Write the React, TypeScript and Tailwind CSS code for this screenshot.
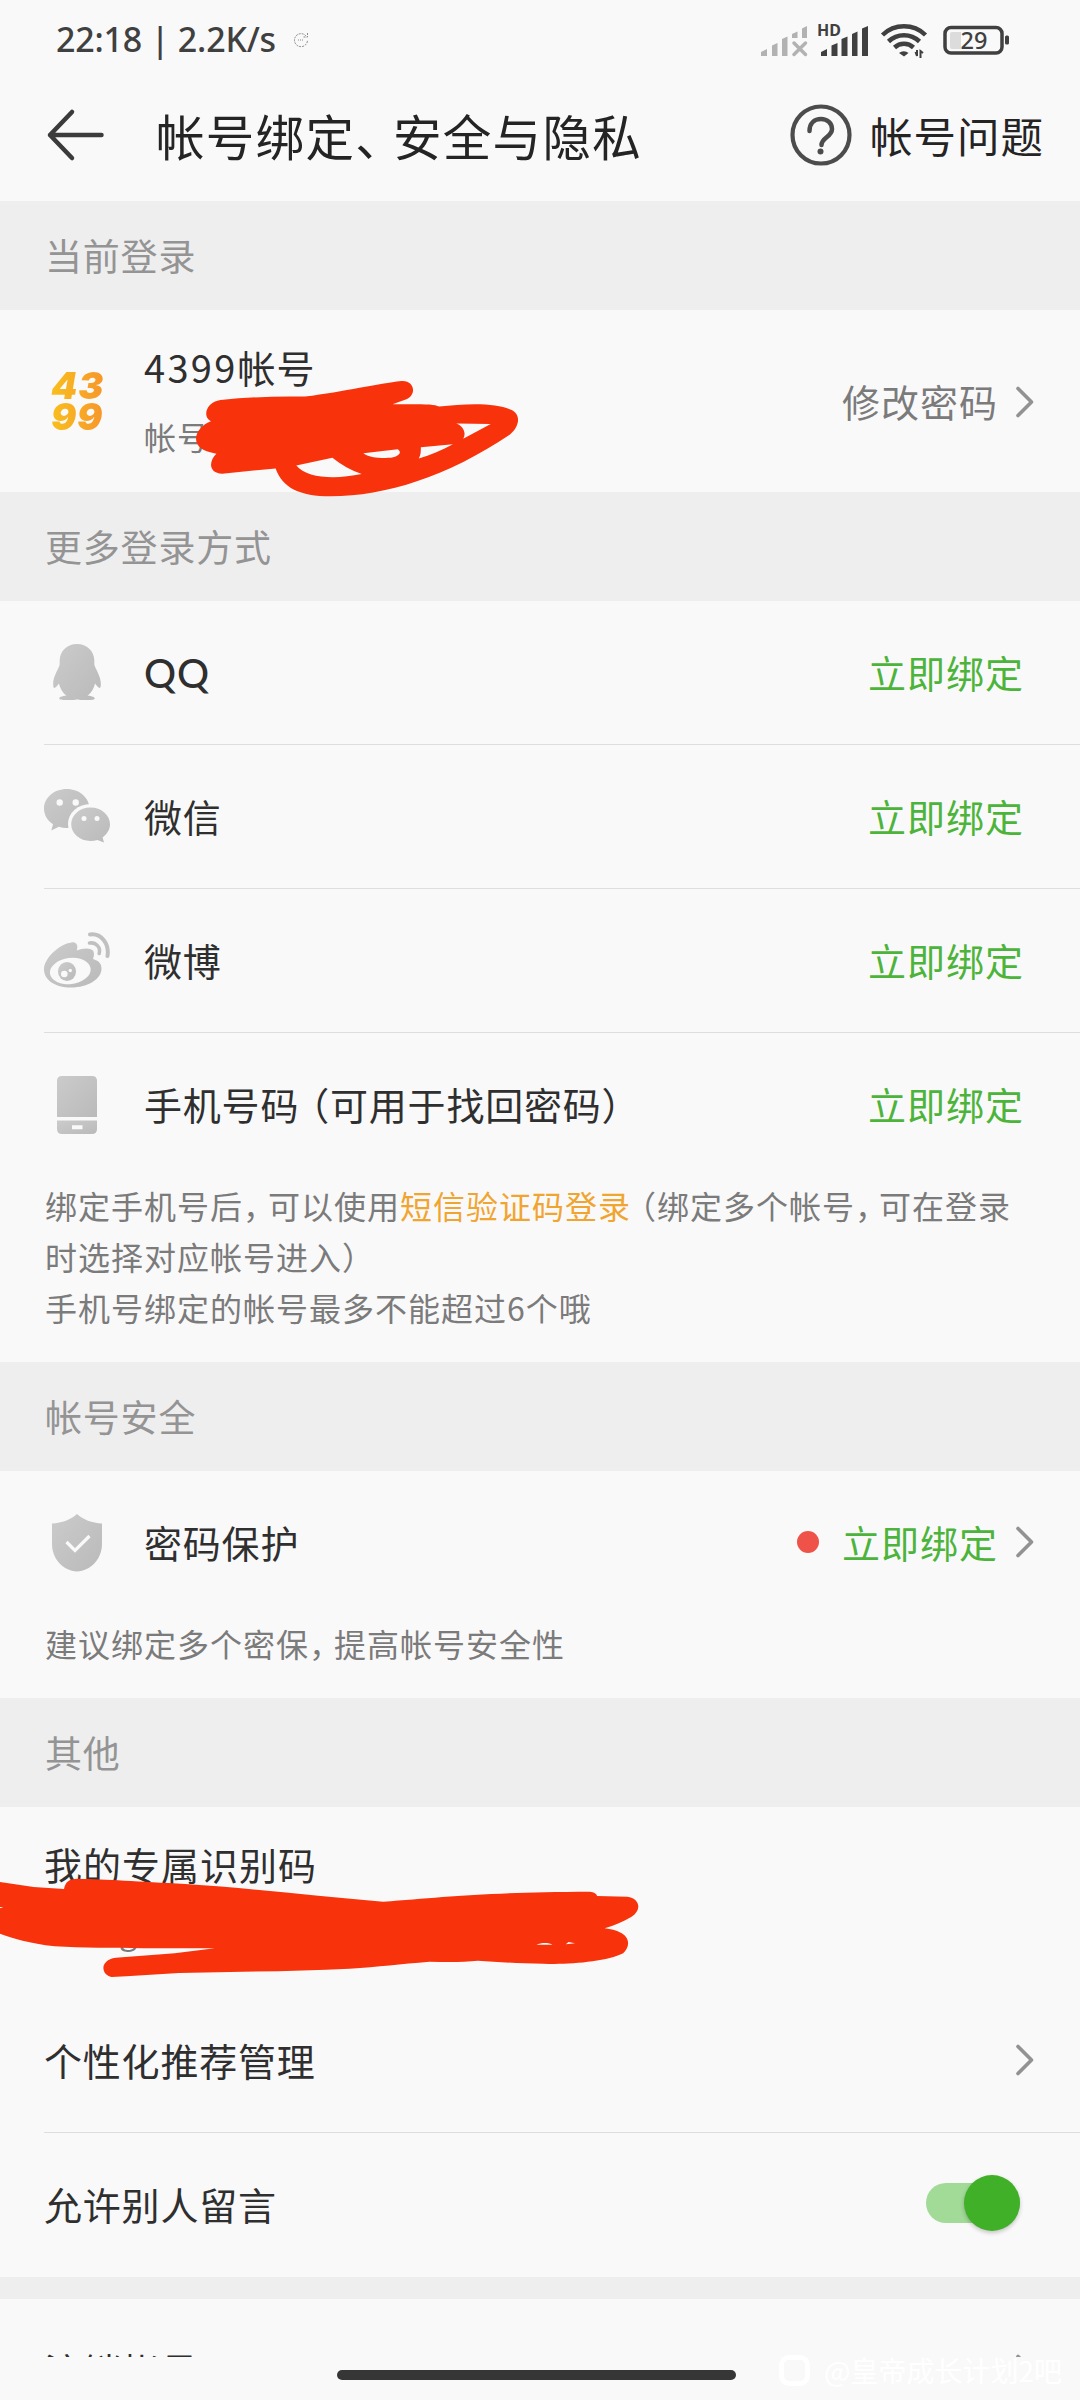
import { useState } from "react";
import type { ReactNode } from "react";

interface RowProps {
  icon?: ReactNode;
  label: ReactNode;
  divider?: boolean;
  children?: ReactNode;
}

function Row({ icon, label, divider, children }: RowProps) {
  return (
    <div className="ml-[44px] shrink-0">
      <div className="flex h-[143px] items-center pb-[3px]">
        {icon && <div className="mt-[3px] mr-[34px] flex h-[66px] w-[66px] items-center justify-center">{icon}</div>}
        <div className="flex-1 text-[38px] tracking-[0.8px] text-[#2f2f2f]">{label}</div>
        {children}
      </div>
      <div className={divider ? "h-px bg-[#dededf]" : "h-px"} />
    </div>
  );
}

function SectionHeader({ children }: { children: ReactNode }) {
  return (
    <div className="flex h-[109px] shrink-0 items-center bg-[#efeeef] pl-[45px] text-[37px] tracking-[0.8px] text-[#949494]">
      {children}
    </div>
  );
}

function BindButton() {
  return <button className="mr-[56px] text-[38px] tracking-[1px] text-[#4db43b]">立即绑定</button>;
}

function Chevron() {
  return (
    <svg className="mt-[2px] mr-[45px] ml-[17px] h-[34px] w-[20px]" viewBox="0 0 20 34" fill="none">
      <path d="M3 3.5 16.5 17 3 30.5" stroke="#929292" strokeWidth="3.6" strokeLinecap="round" strokeLinejoin="round" />
    </svg>
  );
}

// One shared gradient gives the icons their faded grey
function IconDefs() {
  return (
    <svg className="absolute h-0 w-0" aria-hidden="true">
      <defs>
        <linearGradient id="grey" x1="0" y1="0" x2="1" y2="1">
          <stop offset="0" stopColor="#cbcbcb" />
          <stop offset="1" stopColor="#bababb" />
        </linearGradient>
      </defs>
    </svg>
  );
}

function QQIcon() {
  return (
    <svg className="h-[66px] w-[66px]" viewBox="0 0 66 66" fill="url(#grey)">
      <path d="M33 4C23 4 16 11 15.700 20C15.500 22.500 16 24 15.300 26C13 31 9.500 37 9.200 43C9 46 9.600 48 10.300 48C11.500 48 13.500 45.500 15 43.500C16 48 18.500 53 22.500 55.500C17.500 56.300 15.300 57 15.300 58.500C15.300 60 19 60 25 60C30 60 31 59.700 33 59.400C35 59.700 36 60 41 60C47 60 50.700 60 50.700 58.500C50.700 57 48.500 56.300 43.500 55.500C47.500 53 50 48 51 43.500C52.500 45.500 54.500 48 55.700 48C56.400 48 57 46 56.800 43C56.500 37 53 31 50.700 26C50 24 50.500 22.500 50.300 20C50 11 43 4 33 4Z" />
    </svg>
  );
}

function WeChatIcon() {
  return (
    <svg className="h-[66px] w-[66px]" viewBox="0 0 66 66">
      <path
        d="M22.700 5C10 5 0 13.800 0 24.700C0 31 3.500 36.600 9 40.200L7.300 46.500L14.800 42.800C17.300 43.600 20 44 22.700 44C35.400 44 45.500 35.500 45.500 24.700C45.500 13.800 35.400 5 22.700 5Z"
        fill="url(#grey)"
      />
      <ellipse cx="46.500" cy="40" rx="22.500" ry="20" fill="#faf9fa" />
      <path
        d="M46.500 23.500C35.700 23.500 27.200 31 27.200 40.300C27.200 49.600 35.700 57 46.500 57C49 57 51.200 56.700 53.400 56L60 58.600L58.600 53.400C63 50.200 66 45.600 66 40.300C66 31 57.300 23.500 46.500 23.500Z"
        fill="url(#grey)"
      />
      <g fill="#faf9fa">
        <circle cx="15.700" cy="18.500" r="3.200" />
        <circle cx="31.700" cy="18.500" r="3.200" />
        <circle cx="40" cy="34.500" r="2.500" />
        <circle cx="53" cy="34.500" r="2.500" />
      </g>
    </svg>
  );
}

function WeiboIcon() {
  return (
    <svg className="h-[66px] w-[66px]" viewBox="0 0 66 66" fill="none">
      <path
        d="M27.500 14.500C32.500 13.500 34.500 17.500 32.700 22.500C39 20 47.500 19.500 49.500 23.500C50.600 26 49.700 28.500 49 31C54.500 32.500 57.500 35.500 57.500 40.500C57.500 51 44 59.500 27 59.500C11 59.500 0 52 0 41.500C0 30 15.500 16 27.500 14.500Z"
        fill="url(#grey)"
      />
      <ellipse cx="26.300" cy="43" rx="20.500" ry="13" fill="#faf9fa" transform="rotate(-7 26.300 43)" />
      <ellipse cx="23" cy="43.500" rx="9" ry="9.500" fill="url(#grey)" />
      <circle cx="20.300" cy="46" r="3.300" fill="#faf9fa" />
      <circle cx="26.300" cy="42.500" r="1.700" fill="#faf9fa" />
      <path d="M45.500 15C52 14 57 19.500 55.200 25.500" stroke="#c0c0c1" strokeWidth="3.600" strokeLinecap="round" />
      <path d="M46 6.500C57 5 65.500 15.500 63.500 28" stroke="#c0c0c1" strokeWidth="4" strokeLinecap="round" />
    </svg>
  );
}

function PhoneIcon() {
  return (
    <svg className="h-[66px] w-[66px]" viewBox="0 0 66 66" fill="url(#grey)">
      <path d="M18 4H48Q53 4 53 9V45H13V9Q13 4 18 4Z" />
      <path
        fillRule="evenodd"
        d="M13 48.500H53V57Q53 62 48 62H18Q13 62 13 57ZM28 53.300V57.300H38.500V53.300Z"
      />
    </svg>
  );
}

function ShieldIcon() {
  return (
    <svg className="h-[66px] w-[66px]" viewBox="0 0 66 66">
      <path
        d="M33 4C39 9.500 48 13 58 13.500V34C58 49 46.500 61 33 61.500C19.500 61 8 49 8 34V13.500C18 13 27 9.500 33 4Z"
        fill="url(#grey)"
      />
      <path d="M22.500 32 31 40.500 45.500 26" stroke="#faf9fa" strokeWidth="3.200" fill="none" />
    </svg>
  );
}

function Logo4399() {
  return (
    <div className="w-[66px] bg-linear-to-r from-[#f8c417] to-[#f6912c] bg-clip-text pt-px pl-[7px] font-[Inter,'Liberation_Sans',sans-serif] text-[37.5px] leading-[31px] font-black tracking-[0.8px] text-transparent italic">
      <div>43</div>
      <div>99</div>
    </div>
  );
}

function StatusBar() {
  return (
    <div className="flex h-[74px] shrink-0 items-center pt-[5px] pr-[70px] pl-[56px] text-[#404040]">
      <span className="font-['Noto_Sans','Noto_Sans_CJK_SC',sans-serif] text-[34px] font-medium tracking-[-0.2px]">
        22:18 | 2.2K/s
      </span>
      <svg className="ml-[17px] h-[16px] w-[16px]" viewBox="0 0 16 16" fill="none" stroke="#8a8a8a">
        <path d="M13 4A6.500 6.500 0 1 0 14.500 8M14.500 1V5H10.500" strokeDasharray="2 1" />
        <path d="M5 8H10" strokeDasharray="1 1" />
      </svg>
      <svg className="ml-auto h-[48px] w-[250px]" viewBox="760 15 250 48">
        <g fill="#b2b2b2">
          <path d="M761 51 767 48V55H761ZM772 44.500 777.500 42V55H772ZM782 38 787.500 35.500V55H782ZM792 33 797.500 30.500V37H792ZM802 27.500 807 25V37H802Z" />
          <path d="M794 42 805.500 53.500M805.500 42 794 53.500" stroke="#b2b2b2" strokeWidth="3.500" strokeLinecap="round" />
        </g>
        <text x="817" y="35" fontSize="16" fontWeight="700" fill="#404040" fontFamily="Noto Sans, sans-serif">
          HD
        </text>
        <g fill="#404040">
          <path d="M821 51 827 48V55H821ZM831.500 44.500 837.500 42V55H831.500ZM841.500 38 847.500 35.500V55H841.500ZM852 33 857.500 30.500V55H852ZM862 27.500 868 25V55H862Z" />
          <path d="M899 52A7 7 0 0 1 908.500 52L904 55.500Z" />
          <path d="M915.500 51 917 55V49M920.500 57V50L923 52" stroke="#404040" strokeWidth="2" fill="none" />
        </g>
        <g stroke="#404040" fill="none" strokeWidth="4.500">
          <path d="M882.500 34A31 31 0 0 1 925.500 34" />
          <path d="M888.500 40.500A22.500 22.500 0 0 1 919.500 40.500" />
          <path d="M894.500 46.500A14 14 0 0 1 913.500 46.500" />
        </g>
        <rect x="945" y="26.500" width="57" height="25.500" rx="6" stroke="#404040" strokeWidth="3.500" fill="none" />
        <path d="M952 31H961V48H952Q950 48 950 46V33Q950 31 952 31Z" fill="#dcdcdc" />
        <rect x="1005" y="34.500" width="4" height="9" rx="1.500" fill="#404040" />
        <text
          x="974"
          y="47.500"
          fontSize="23.500"
          fontWeight="500"
          textAnchor="middle"
          fill="#404040"
          fontFamily="Noto Sans, sans-serif"
        >
          29
        </text>
      </svg>
    </div>
  );
}

function TitleBar() {
  return (
    <div className="flex h-[127px] shrink-0 items-center pr-[36px] pb-[5px] pl-[46px] text-[#242424]">
      <svg className="h-[54px] w-[59px]" viewBox="0 0 59 54" fill="none" stroke="#3b3b3b" strokeWidth="4.500">
        <path d="M26 4 4 27 26 50M4 27H55.500" strokeLinecap="round" strokeLinejoin="round" />
      </svg>
      <h1 className="ml-[51px] text-[48.500px] tracking-[1.300px]">
        帐号绑定、<span className="-ml-[12px]">安全与隐私</span>
      </h1>
      <svg className="ml-auto h-[62px] w-[62px]" viewBox="0 0 62 62" fill="none" stroke="#4c4c4c">
        <circle cx="31" cy="31" r="28.500" strokeWidth="4.200" />
        <path
          d="M19.500 27C19.500 19 24.500 15 31 15C37.500 15 42 19.500 42 25C42 33 31.500 33.500 31.500 41"
          strokeWidth="4.500"
          strokeLinecap="round"
        />
        <circle cx="30.500" cy="47.500" r="3" fill="#4c4c4c" stroke="none" />
      </svg>
      <span className="ml-[18px] text-[42.500px] tracking-[1px]">帐号问题</span>
    </div>
  );
}

function Toggle({ on, onChange }: { on: boolean; onChange: () => void }) {
  return (
    <button
      role="switch"
      aria-checked={on}
      aria-label="允许别人留言"
      onClick={onChange}
      className="mr-[60px] flex h-[56px] w-[94px] items-center"
    >
      <span className={on ? "h-[40px] flex-1 rounded-full bg-[#a2da98]" : "h-[40px] flex-1 rounded-full bg-[#cccccc]"} />
      <span
        className={
          on
            ? "-ml-[56px] h-[56px] w-[56px] rounded-full bg-[#3fb027] shadow-[0_2px_4px_rgba(0,0,0,0.22)]"
            : "order-first -mr-[56px] h-[56px] w-[56px] rounded-full bg-white shadow-[0_2px_4px_rgba(0,0,0,0.22)]"
        }
      />
    </button>
  );
}

export default function App() {
  const [allowComments, setAllowComments] = useState(true);

  return (
    <div className="relative flex h-[2400px] w-[1080px] flex-col overflow-hidden bg-[#faf9fa] font-['Noto_Sans_CJK_SC',sans-serif] whitespace-nowrap">
      <IconDefs />
      <StatusBar />
      <TitleBar />

      <SectionHeader>当前登录</SectionHeader>
      <div className="flex h-[182px] shrink-0 items-center pb-px pl-[44px]">
        <Logo4399 />
        <div className="ml-[34px] flex-1 pt-[2px]">
          <div className="text-[38px] leading-[68px] tracking-[1px] text-[#2f2f2f]">
            <span className="tracking-[2.3px]">4399</span>帐号
          </div>
          <div className="text-[32px] leading-[70px] tracking-[1px] text-[#7b7b7b]">帐号</div>
        </div>
        <span className="text-[38px] leading-[52px] tracking-[1px] text-[#7b7b7b]">修改密码</span>
        <Chevron />
      </div>

      <SectionHeader>更多登录方式</SectionHeader>
      <Row
        icon={<QQIcon />}
        label={<div className="pt-[3px] font-[Lato,sans-serif] text-[40px] font-medium">QQ</div>}
        divider
      >
        <BindButton />
      </Row>
      <Row icon={<WeChatIcon />} label="微信" divider>
        <BindButton />
      </Row>
      <Row icon={<WeiboIcon />} label="微博" divider>
        <BindButton />
      </Row>
      <Row
        icon={<PhoneIcon />}
        label={
          <>
            手机号码<span className="-ml-[8px]">（可用于找回密码）</span>
          </>
        }
      >
        <BindButton />
      </Row>
      <div className="h-[185px] shrink-0 pt-[3px] pl-[45px] text-[32px] leading-[51px] tracking-[1px] text-[#7b7b7b]">
        <p>
          绑定手机号后，<span className="-ml-[8px]">可以使用</span>
          <span className="text-[#f1a531]">短信验证码登录</span>
          <span className="-ml-[7px]">（绑定多个帐号，</span>
          <span className="-ml-[9px]">可在登录</span>
        </p>
        <p>时选择对应帐号进入）</p>
        <p>手机号绑定的帐号最多不能超过6个哦</p>
      </div>

      <SectionHeader>帐号安全</SectionHeader>
      <Row icon={<ShieldIcon />} label="密码保护">
        <span className="mt-[2px] mr-[23px] h-[22px] w-[22px] rounded-full bg-[#ef5248]" />
        <span className="text-[38px] tracking-[1px] text-[#4db43b]">立即绑定</span>
        <Chevron />
      </Row>
      <div className="h-[83px] shrink-0 pl-[45px] text-[32px] leading-[56px] tracking-[1px] text-[#7b7b7b]">
        建议绑定多个密保，<span className="-ml-[8px]">提高帐号安全性</span>
      </div>

      <SectionHeader>其他</SectionHeader>
      <div className="h-[182px] shrink-0 pt-[27px] pl-[44px]">
        <div className="text-[38px] leading-[60px] tracking-[1px] text-[#2f2f2f]">我的专属识别码</div>
        <div className="pl-[75px] text-[32px] leading-[74px] text-[#7b7b7b]">g</div>
      </div>
      <Row label="个性化推荐管理" divider>
        <Chevron />
      </Row>
      <Row label="允许别人留言">
        <Toggle on={allowComments} onChange={() => setAllowComments(!allowComments)} />
      </Row>

      <div className="h-[22px] shrink-0 bg-[#efeeef]" />
      {/* The list is cut off where the gesture area begins */}
      <div className="h-[58px] shrink-0 overflow-hidden">
        <Row label="注销帐号">
          <Chevron />
        </Row>
      </div>
      <div className="flex flex-1 justify-center pt-[13px] pr-[7px]">
        <div className="h-[10px] w-[399px] rounded-full bg-[#363636]" />
      </div>

      {/* Marker strokes over the private values */}
      <svg
        className="absolute top-[380px] left-[193px] h-[118px] w-[327px]"
        viewBox="560 540 950 355"
        preserveAspectRatio="none"
        fill="#f8330b"
        fillRule="evenodd"
      >
        <path d="M640 600C600 605 585 650 612 664C560 685 550 745 610 757L628 762C605 785 605 820 645 822L800 806C820 865 870 889 960 890C1120 890 1300 830 1480 705C1510 680 1515 640 1480 628C1440 608 1350 610 1275 620C1260 612 1230 613 1140 613L1180 598C1210 585 1205 540 1165 543C1100 550 1000 575 885 590C800 588 720 592 640 600ZM860 797L965 774C990 795 1020 812 1050 823C970 840 890 835 860 797ZM1055 760L1155 748C1165 755 1165 768 1135 774C1100 776 1070 772 1055 760ZM1222 742L1315 733C1280 752 1250 765 1216 776C1222 765 1222 755 1222 742ZM1325 671L1425 672L1345 717C1355 700 1345 678 1325 671Z" />
      </svg>
      <svg
        className="absolute top-[1877px] left-0 h-[101px] w-[640px]"
        viewBox="0 171 1520 303"
        preserveAspectRatio="none"
        fill="#f8330b"
        fillRule="evenodd"
      >
        <path d="M0 186L80 201L152 207C155 185 165 176 185 176C250 178 330 184 440 192C600 205 750 228 910 245C1050 232 1150 216 1400 215C1412 216 1417 222 1418 228L1490 230C1520 235 1525 270 1500 290C1480 305 1460 315 1436 325C1500 335 1500 375 1480 400C1440 425 1350 435 1290 431C1230 430 1180 426 1135 422C1100 427 1060 426 1020 425C950 432 900 440 830 446C700 454 560 455 425 459L300 469L265 471C240 465 235 420 275 413L415 400L510 385C400 383 250 388 130 379C70 370 30 355 0 341ZM1274 374C1285 367 1305 367 1312 374ZM1344 373L1350 366L1366 370ZM0 261L8 262L0 265Z" />
      </svg>

      <div className="absolute right-[18px] bottom-[10px] flex items-center text-[28px] leading-[40px] text-white">
        <span className="mr-[14px] h-[31px] w-[31px] rounded-[10px] border-[5px] border-white" />
        @皇帝成长计划2吧
      </div>
    </div>
  );
}
